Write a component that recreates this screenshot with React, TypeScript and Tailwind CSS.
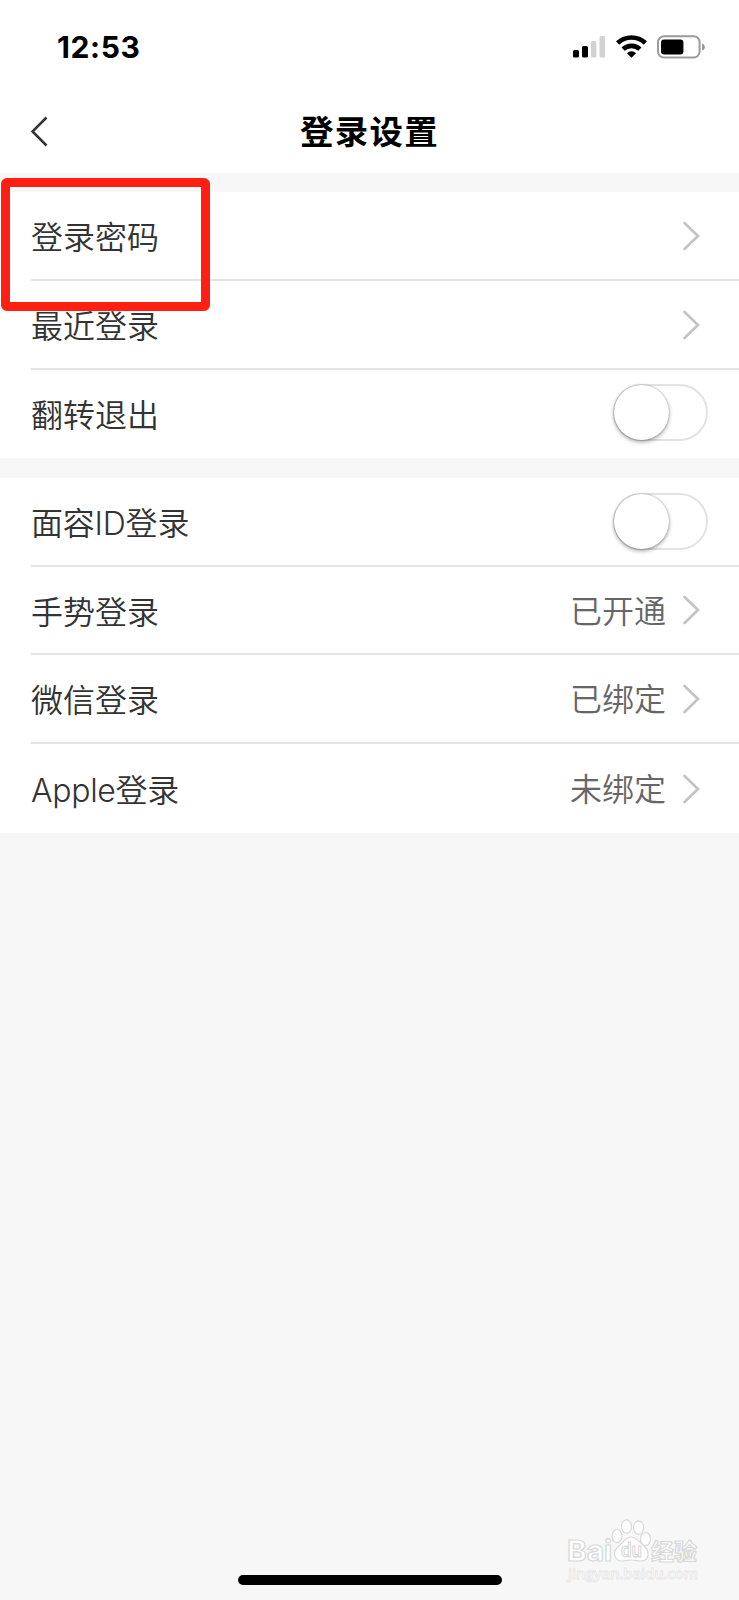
import React, { useState } from 'react';

interface Item {
  label: string;
  value?: string;
  toggle?: boolean;
  height: string;
  tracking?: string;
}

const grupoConta: Item[] = [
  { label: '登录密码', height: 'h-[89px]' },
  { label: '最近登录', height: 'h-[89px]' },
  { label: '翻转退出', toggle: true, height: 'h-[88px]' },
];

const grupoLogin: Item[] = [
  { label: '面容ID登录', toggle: true, height: 'h-[89px]', tracking: 'tracking-[-0.2px]' },
  { label: '手势登录', value: '已开通', height: 'h-[88px]' },
  { label: '微信登录', value: '已绑定', height: 'h-[89px]' },
  { label: 'Apple登录', value: '未绑定', height: 'h-[89px]', tracking: 'tracking-[-0.3px]' },
];

function StatusBar() {
  return (
    <div className="flex h-[94px] items-center justify-between pl-[57px] pr-[33px]">
      <span className="font-['Inter'] text-[30px] font-bold leading-none tracking-[0.6px] text-black">12:53</span>
      <div className="flex items-center">
        <svg width="33" height="24" viewBox="0 0 33 24">
          <rect x="0" y="15" width="6" height="7.5" rx="1.5" fill="#000" />
          <rect x="9" y="11" width="6" height="11.5" rx="1.5" fill="#000" />
          <rect x="17.8" y="6" width="5.6" height="16.5" rx="1.5" fill="#d2d2d2" />
          <rect x="26.5" y="1" width="5.6" height="21.5" rx="1.5" fill="#d2d2d2" />
        </svg>
        <svg className="ml-2.5" width="31" height="24" viewBox="0 0 31 24" fill="none" stroke="#000" strokeWidth="4.6">
          <path d="M1.6 8A20.2 20.2 0 0 1 29.4 8" />
          <path d="M7.1 14.2A12.2 12.2 0 0 1 23.9 14.2" />
          <path d="M15.5 22.8L10.9 18.2A6.6 6.6 0 0 1 20.1 18.2Z" fill="#000" stroke="none" />
        </svg>
        <svg className="ml-2.5" width="49" height="24" viewBox="0 0 49 24">
          <rect x="1" y="1.2" width="41.6" height="21.4" rx="6" fill="none" stroke="#9b9b9b" strokeWidth="2" />
          <rect x="4" y="4.4" width="22.4" height="15.2" rx="3" fill="#000" />
          <path d="M45.2 8.4C48.6 9.6 48.6 14.4 45.2 15.6Z" fill="#8f8f8f" />
        </svg>
      </div>
    </div>
  );
}

function Chevron() {
  return (
    <svg width="18" height="30" viewBox="0 0 18 30" fill="none" stroke="#c4c4c4" strokeWidth="2.7" strokeLinecap="round">
      <path d="M2.5 2L16 15L2.5 28" />
    </svg>
  );
}

function Toggle() {
  const [on, setOn] = useState(false);

  return (
    <button
      type="button"
      role="switch"
      aria-checked={on}
      onClick={() => setOn(!on)}
      className={`flex h-[57px] w-[95px] rounded-full border-2 ${
        on ? 'justify-end border-green-500 bg-green-500' : 'border-[#e3e3e3] bg-white'
      }`}
    >
      <span className="-mt-px -ml-px h-[55px] w-[55px] rounded-full bg-white shadow-[0_2px_4px_rgba(0,0,0,0.35),0_0_2px_rgba(0,0,0,0.3)]" />
    </button>
  );
}

function Row({ item, last }: { item: Item; last: boolean }) {
  return (
    <div className={`ml-[31px] flex items-center justify-between ${item.height} ${last ? '' : 'border-b-2 border-[#e4e4e4]'}`}>
      <span className={`text-[32px] leading-none text-[#333] ${last && item.toggle ? 'pt-[3px]' : 'pt-[5px]'} ${item.tracking ?? ''}`}>
        {item.label}
      </span>
      {item.toggle ? (
        <div className={`pr-[31px] ${last ? 'pb-[3px]' : ''}`}>
          <Toggle />
        </div>
      ) : (
        <div className="flex items-center gap-4 pr-[39px]">
          {item.value && <span className="pt-[3px] text-[32px] leading-none text-[#666]">{item.value}</span>}
          <Chevron />
        </div>
      )}
    </div>
  );
}

function Group({ items }: { items: Item[] }) {
  return (
    <div className="bg-white">
      {items.map((item, i) => (
        <Row key={item.label} item={item} last={i === items.length - 1} />
      ))}
    </div>
  );
}

function Watermark() {
  return (
    <svg width="140" height="64" viewBox="0 0 140 64" fill="#fff" stroke="#d9d9d9" strokeWidth="1.2">
      <text x="3" y="42" fontFamily="Inter" fontSize="29" fontWeight="700" textLength="45" lengthAdjust="spacingAndGlyphs">Bai</text>
      <ellipse cx="53" cy="17" rx="5" ry="6.5" />
      <ellipse cx="62.5" cy="7.5" rx="5" ry="6.7" />
      <ellipse cx="74.5" cy="8.5" rx="5" ry="6.7" />
      <ellipse cx="81.5" cy="20" rx="5" ry="6.5" />
      <path d="M67 18C61 18 58 25 53 29C48 34 51 42 58 42C62 42 64 41 67 41C71 41 73 42 77 42C85 42 86 33 81 28C76 24 73 18 67 18Z" />
      <text x="57" y="38" fontFamily="Inter" fontSize="20" fontWeight="600" textLength="21" lengthAdjust="spacingAndGlyphs">du</text>
      <text x="87" y="40.5" fontFamily="'Noto Sans CJK SC', sans-serif" fontSize="23" fontWeight="700" textLength="46">经验</text>
      <text x="4" y="60" fontFamily="'Open Sans', sans-serif" fontSize="15" fontWeight="600" strokeWidth="0.8" stroke="#e6e6e6" textLength="130">jingyan.baidu.com</text>
    </svg>
  );
}

export default function App() {
  return (
    <div className="relative flex h-[1600px] w-[739px] flex-col overflow-hidden bg-[#f7f7f7] font-['Inter','Noto_Sans_CJK_SC',sans-serif] font-[350]">
      <div className="h-[173px] bg-white">
        <StatusBar />
        <div className="grid h-[76px] grid-cols-3 items-center">
          <button type="button" aria-label="返回" className="ml-[30px] w-5">
            <svg width="20" height="32" viewBox="0 0 20 32" fill="none" stroke="#333" strokeWidth="2.5">
              <path d="M16.5 1.5L2.5 15.5L16.5 29.5" />
            </svg>
          </button>
          <h1 className="whitespace-nowrap pt-px text-center text-[33.5px] font-bold leading-none tracking-[1.2px] text-black">登录设置</h1>
        </div>
      </div>

      <div className="mt-[19px]">
        <Group items={grupoConta} />
      </div>
      <div className="mt-5">
        <Group items={grupoLogin} />
      </div>

      <div className="mt-auto flex justify-end pr-[35px]">
        <Watermark />
      </div>
      <div className="mx-auto mb-[15px] -mt-2 h-2.5 w-[264px] shrink-0 rounded-full bg-black" />

      {/* destaque sobre a primeira opção */}
      <div className="pointer-events-none absolute left-[1px] top-[178px] h-[133px] w-[209px] rounded-[6px] border-[9px] border-[#ff2013]" />
    </div>
  );
}
